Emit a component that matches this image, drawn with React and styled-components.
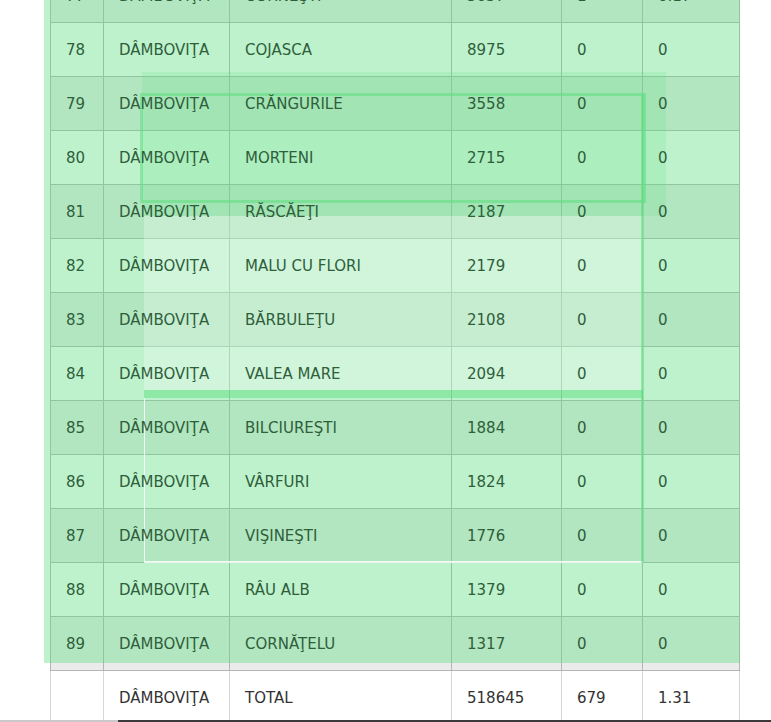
import React from "react";
import styled, { createGlobalStyle } from "styled-components";

const rows = [
    { nr: 77, judet: "DÂMBOVIŢA", loc: "CORNEŞTI", pop: 5637, cazuri: 1, rata: "0.17" },
    { nr: 78, judet: "DÂMBOVIŢA", loc: "COJASCA", pop: 8975, cazuri: 0, rata: "0" },
    { nr: 79, judet: "DÂMBOVIŢA", loc: "CRĂNGURILE", pop: 3558, cazuri: 0, rata: "0" },
    { nr: 80, judet: "DÂMBOVIŢA", loc: "MORTENI", pop: 2715, cazuri: 0, rata: "0" },
    { nr: 81, judet: "DÂMBOVIŢA", loc: "RĂSCĂEŢI", pop: 2187, cazuri: 0, rata: "0" },
    { nr: 82, judet: "DÂMBOVIŢA", loc: "MALU CU FLORI", pop: 2179, cazuri: 0, rata: "0" },
    { nr: 83, judet: "DÂMBOVIŢA", loc: "BĂRBULEŢU", pop: 2108, cazuri: 0, rata: "0" },
    { nr: 84, judet: "DÂMBOVIŢA", loc: "VALEA MARE", pop: 2094, cazuri: 0, rata: "0" },
    { nr: 85, judet: "DÂMBOVIŢA", loc: "BILCIUREŞTI", pop: 1884, cazuri: 0, rata: "0" },
    { nr: 86, judet: "DÂMBOVIŢA", loc: "VÂRFURI", pop: 1824, cazuri: 0, rata: "0" },
    { nr: 87, judet: "DÂMBOVIŢA", loc: "VIŞINEŞTI", pop: 1776, cazuri: 0, rata: "0" },
    { nr: 88, judet: "DÂMBOVIŢA", loc: "RÂU ALB", pop: 1379, cazuri: 0, rata: "0" },
    { nr: 89, judet: "DÂMBOVIŢA", loc: "CORNĂŢELU", pop: 1317, cazuri: 0, rata: "0" },
];

// widths of the columns, left to right
const colWidths = [53, 126, 222, 110, 81, 97];

const App = () => {
    return (
        <Page>
            <GlobalStyle />
            <TableWrap>
                <Table>
                    <colgroup>
                        {colWidths.map((w, i) => (
                            <col key={i} style={{ width: w }} />
                        ))}
                    </colgroup>
                    <tbody>
                        {rows.map((r) => (
                            <Row key={r.nr} $striped={r.nr % 2 === 1}>
                                <Cell><Text>{r.nr}</Text></Cell>
                                <Cell><Text>{r.judet}</Text></Cell>
                                <Cell><Text>{r.loc}</Text></Cell>
                                <Cell><Text>{r.pop}</Text></Cell>
                                <Cell><Text>{r.cazuri}</Text></Cell>
                                <Cell><Text>{r.rata}</Text></Cell>
                            </Row>
                        ))}
                        <Row>
                            <Cell $total></Cell>
                            <Cell $total><Text $total>DÂMBOVIŢA</Text></Cell>
                            <Cell $total><Text $total>TOTAL</Text></Cell>
                            <Cell $total><Text $total>518645</Text></Cell>
                            <Cell $total><Text $total>679</Text></Cell>
                            <Cell $total><Text $total>1.31</Text></Cell>
                        </Row>
                    </tbody>
                </Table>
            </TableWrap>

            {/* highlight layers drawn over the table (text stays on top) */}
            <Highlight />
            <DarkBox />
            <OutlineBox />
            <LightBox />
            <GreenBar />
            <WhiteFrame />
            <GreenLine />

            <Scrollbar>
                <ScrollThumb />
            </Scrollbar>
        </Page>
    );
};
export default App;

const GlobalStyle = createGlobalStyle`
    html, body {
        margin: 0;
        padding: 0;
        background: #ffffff;
    }
    body {
        font-family: "DejaVu Sans", "Liberation Sans", sans-serif;
    }
`;

const Page = styled.div`
    position: relative;
    z-index: 0;
    width: 771px;
    height: 722px;
    overflow: hidden;
    background: #ffffff;
`;

const TableWrap = styled.div`
    margin-top: -32px; /* page is scrolled, row 77 is cut at the top */
    padding-left: 50px;
`;

const Table = styled.table`
    border-collapse: collapse;
    table-layout: fixed;
    width: 690px;
`;

const Row = styled.tr`
    background: ${(p) => (p.$striped ? "#ebebeb" : "#ffffff")};
`;

const Cell = styled.td`
    height: 54px;
    padding: 0 15px;
    border: 1px solid ${(p) => (p.$total ? "#d6d6d6" : "#b5b5b5")};
    font-size: 15px;
    white-space: nowrap;
    vertical-align: middle;
    box-sizing: border-box;
`;

const Text = styled.span`
    position: relative;
    z-index: 5;
    color: ${(p) => (p.$total ? "#333333" : "#2f5e3b")};
`;

const Layer = styled.div`
    position: absolute;
    pointer-events: none;
`;

const Highlight = styled(Layer)`
    left: 44px;
    top: 0;
    width: 696px;
    height: 663px;
    background: rgba(93, 222, 127, 0.4);
`;

const DarkBox = styled(Layer)`
    left: 142px;
    top: 72px;
    width: 524px;
    height: 144px;
    background: rgba(93, 222, 127, 0.18);
`;

const OutlineBox = styled(Layer)`
    left: 140px;
    top: 93px;
    width: 506px;
    height: 110px;
    box-sizing: border-box;
    border: 3px solid rgba(93, 222, 127, 0.55);
`;

const LightBox = styled(Layer)`
    left: 144px;
    top: 216px;
    width: 499px;
    height: 174px;
    background: rgba(255, 255, 255, 0.28);
`;

const GreenBar = styled(Layer)`
    left: 144px;
    top: 390px;
    width: 499px;
    height: 8px;
    background: rgba(93, 222, 127, 0.5);
`;

const WhiteFrame = styled(Layer)`
    left: 144px;
    top: 398px;
    width: 499px;
    height: 165px;
    box-sizing: border-box;
    border-left: 1px solid rgba(255, 255, 255, 0.8);
    border-bottom: 2px solid rgba(255, 255, 255, 0.8);
`;

const GreenLine = styled(Layer)`
    left: 641px;
    top: 95px;
    width: 3px;
    height: 468px;
    background: rgba(93, 222, 127, 0.55);
`;

const Scrollbar = styled.div`
    position: absolute;
    left: 0;
    bottom: 0;
    width: 771px;
    height: 2px;
    background: #c9c9c9;
`;

const ScrollThumb = styled.div`
    margin-left: 118px;
    height: 2px;
    background: #3a3a3a;
`;
